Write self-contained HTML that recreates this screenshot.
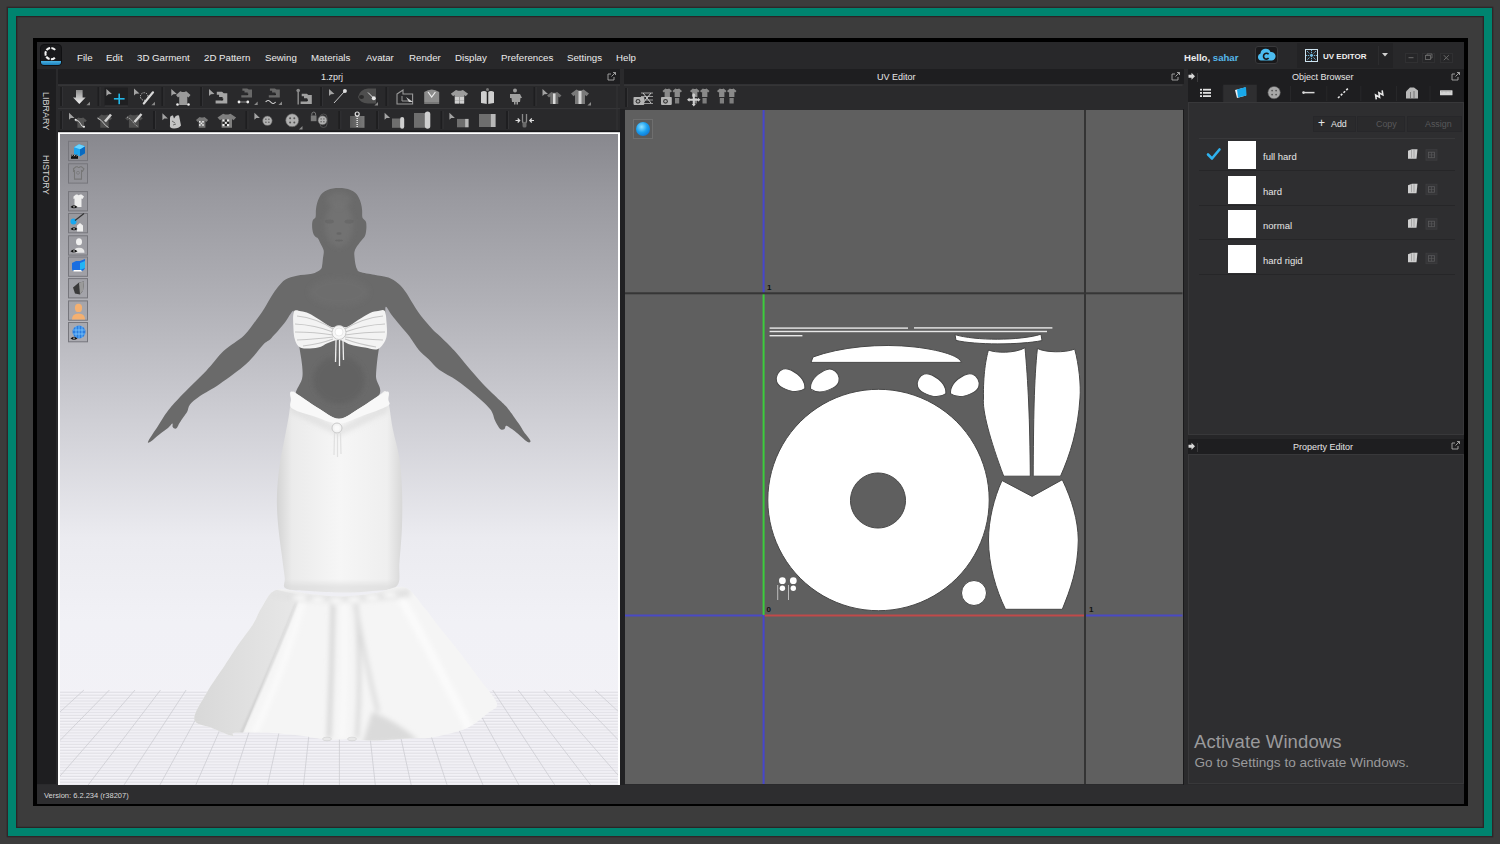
<!DOCTYPE html>
<html><head><meta charset="utf-8">
<style>
*{margin:0;padding:0;box-sizing:border-box}
html,body{width:1500px;height:844px;overflow:hidden;background:#3c3c3c;font-family:"Liberation Sans",sans-serif}
.a{position:absolute}
#teal{left:8px;top:8px;width:1484px;height:828px;border:8.2px solid #00846f;background:#3c3c3c;box-shadow:0 0 0 1.3px #2f2729,inset 0 0 0 1.3px #2b2426}
#win{left:33px;top:38px;width:1435px;height:768px;background:#000}
#app{left:36.5px;top:42px;width:1427.5px;height:762px;background:#2a2a2c}
.menu{color:#ececec;font-size:9.7px;top:51.6px}
.hdr{background:#1e1e20}
.btn{background:#2a2a2c;border:1px solid #27272a}
.wc{width:13px;height:10.5px;background:#262628;border:1px solid #303032}
.ttl{color:#e6e6e6;font-size:9px}
</style></head><body>
<div id="teal" class="a"></div>
<div id="win" class="a"></div>
<div id="app" class="a"></div>

<!-- menubar -->
<div class="a" style="left:36.5px;top:42px;width:1427.5px;height:27px;background:#28282a"></div>
<div class="a" style="left:39.5px;top:44px;width:22px;height:22px;border-radius:4px;background:#19191b;border:1px solid #101012;overflow:hidden">
  <div class="a" style="left:0;bottom:0;width:22px;height:3.6px;background:linear-gradient(#4ab4e6,#1c7eb8)"></div>
</div>
<svg class="a" style="left:39.5px;top:44px;width:22px;height:22px" viewBox="0 0 22 22"><path d="M15.16,5.85 A5.6,5.6 0 1 0 15.16,13.35" fill="none" stroke="#f4f4f4" stroke-width="2.1" stroke-dasharray="4.2,1.2"/></svg>
<!-- top right -->
<span class="a" style="left:1184px;top:51.5px;color:#ececec;font-size:9.6px;font-weight:bold">Hello, <span style="color:#56b8ec">sahar</span></span>
<div class="a" style="left:1254.6px;top:46.3px;width:23.6px;height:18.1px;border-radius:3px;background:#19191b;border:1px solid #38383a"></div>
<svg class="a" style="left:1256px;top:47px;width:21px;height:17px" viewBox="0 0 21 17"><path d="M5,13.5 a3.6,3.6 0 0 1 -0.5,-7 a5.2,5.2 0 0 1 10,-1.5 a4,4 0 0 1 1.5,8.5z" fill="#4cbdf0"/><path d="M12.6,7.3 a2.9,2.9 0 1 0 0,3.8" stroke="#1a1a1c" stroke-width="1.6" fill="none"/></svg>
<div class="a" style="left:1297.4px;top:43px;width:95.6px;height:24.5px;background:#232325"></div>
<div class="a" style="left:1378px;top:46px;width:1px;height:19px;background:#2c2c2e"></div>
<svg class="a" style="left:1305px;top:49px;width:13px;height:13px" viewBox="0 0 13 13"><rect x="0.5" y="0.5" width="12" height="12" fill="none" stroke="#cfe4f0" stroke-width="1"/><path d="M2,2 L11,11 M11,2 L2,11 M6.5,1 v11 M1,6.5 h11" stroke="#7ccaf0" stroke-width="0.9" stroke-dasharray="1.2,0.8"/></svg>
<span class="a" style="left:1323px;top:51.5px;color:#f0f0f0;font-size:8px;font-weight:bold">UV EDITOR</span>
<svg class="a" style="left:1381px;top:52px;width:8px;height:6px" viewBox="0 0 8 6"><path d="M1,1 h6 l-3,3.5z" fill="#d0d0d0"/></svg>
<div class="a wc" style="left:1404.8px;top:52.5px"></div>
<div class="a wc" style="left:1422.4px;top:52.5px"></div>
<div class="a wc" style="left:1440px;top:52.5px"></div>
<svg class="a" style="left:1400px;top:50px;width:60px;height:15px" viewBox="1400 50 60 15"><path d="M1408.5,57.7 h5" stroke="#6a6a6a" stroke-width="1"/><rect x="1425.5" y="55.5" width="5" height="4" fill="none" stroke="#6a6a6a" stroke-width="0.9"/><path d="M1427,55.5 v-1.5 h5 v4 h-1.5" stroke="#6a6a6a" stroke-width="0.9" fill="none"/><path d="M1443.8,55.2 l5,5 m0,-5 l-5,5" stroke="#6a6a6a" stroke-width="1"/></svg>
<span class="a menu" style="left:77px">File</span>
<span class="a menu" style="left:106px">Edit</span>
<span class="a menu" style="left:137px">3D Garment</span>
<span class="a menu" style="left:204px">2D Pattern</span>
<span class="a menu" style="left:265px">Sewing</span>
<span class="a menu" style="left:311px">Materials</span>
<span class="a menu" style="left:366px">Avatar</span>
<span class="a menu" style="left:409px">Render</span>
<span class="a menu" style="left:455px">Display</span>
<span class="a menu" style="left:501px">Preferences</span>
<span class="a menu" style="left:567px">Settings</span>
<span class="a menu" style="left:616px">Help</span>

<!-- left sidebar -->
<div class="a" style="left:36.5px;top:69px;width:19px;height:715px;background:#1e1e20"></div>

<div class="a" style="left:51px;top:92px;transform-origin:0 0;transform:rotate(90deg);color:#d4d4d4;font-size:9px;white-space:nowrap">LIBRARY</div>
<div class="a" style="left:51px;top:155px;transform-origin:0 0;transform:rotate(90deg);color:#d4d4d4;font-size:9px;white-space:nowrap">HISTORY</div>
<!-- left panel -->
<div class="a hdr" style="left:58px;top:69px;width:562px;height:15px"></div>
<span class="a ttl" style="left:321px;top:72px">1.zprj</span>
<div class="a" style="left:58px;top:84px;width:562px;height:48px;background:#29292b"></div>
<div class="a" style="left:58px;top:132px;width:562px;height:653px;background:#fff"></div>

<div class="a" style="left:60px;top:134px;width:558px;height:651px;overflow:hidden">
<svg width="558" height="651" viewBox="60 134 558 651" style="display:block">
  <defs>
    <linearGradient id="bg" x1="0" y1="134" x2="0" y2="785" gradientUnits="userSpaceOnUse">
      <stop offset="0" stop-color="#88888e"/>
      <stop offset="0.10" stop-color="#9a9aa0"/>
      <stop offset="0.255" stop-color="#b0b0b6"/>
      <stop offset="0.44" stop-color="#cfcfd5"/>
      <stop offset="0.62" stop-color="#ebebf0"/>
      <stop offset="0.75" stop-color="#f1f1f6"/>
      <stop offset="1" stop-color="#f3f2f7"/>
    </linearGradient>
    <pattern id="hl" x="0" y="690" width="10" height="2.9" patternUnits="userSpaceOnUse">
      <rect width="10" height="2.9" fill="#f4f3f8"/><rect y="1.7" width="10" height="1" fill="#dcdce2"/>
    </pattern>
    <linearGradient id="skg" x1="277" y1="0" x2="402" y2="0" gradientUnits="userSpaceOnUse">
      <stop offset="0" stop-color="#d4d4d4"/><stop offset="0.12" stop-color="#ebebeb"/>
      <stop offset="0.5" stop-color="#f6f6f6"/><stop offset="0.88" stop-color="#efefef"/><stop offset="1" stop-color="#d8d8d8"/>
    </linearGradient>
    <filter id="bl" x="-20%" y="-20%" width="140%" height="140%"><feGaussianBlur stdDeviation="2.5"/></filter>
    <filter id="bl1" x="-20%" y="-20%" width="140%" height="140%"><feGaussianBlur stdDeviation="1"/></filter>
    <clipPath id="flc"><path d="M276.8,589.8 C284.8,587.6 299.0,592.9 310.0,594.0 C321.0,595.1 332.0,596.7 342.8,596.5 C353.6,596.3 364.7,594.5 375.0,593.0 C385.3,591.5 396.2,584.8 404.4,587.2 C412.6,589.6 418.3,600.6 424.2,607.4 C430.1,614.2 434.5,621.0 440.0,628.0 C445.5,635.0 450.9,641.0 457.2,649.2 C463.5,657.4 471.4,668.0 478.0,677.0 C484.6,686.0 495.1,697.1 496.8,703.1 C498.5,709.1 493.1,708.8 488.0,713.0 C482.9,717.2 475.2,724.4 466.0,728.4 C456.8,732.4 441.8,735.6 433.0,737.2 C424.2,738.9 422.4,737.8 413.2,738.3 C404.0,738.8 388.3,740.3 378.0,740.5 C367.7,740.7 360.4,739.6 351.6,739.4 C342.8,739.2 333.3,740.0 325.2,739.4 C317.1,738.8 312.7,737.1 303.2,736.0 C293.7,734.9 279.4,733.3 268.0,732.8 C256.6,732.3 240.9,732.2 235.0,732.8 C229.1,733.3 236.5,736.8 232.8,736.1 C229.1,735.4 219.4,731.1 213.0,728.4 C206.6,725.6 195.4,725.5 194.3,719.6 C193.2,713.7 201.3,702.3 206.4,693.2 C211.5,684.1 219.7,673.0 225.0,665.0 C230.3,657.0 233.4,651.7 238.0,645.0 C242.6,638.3 248.6,631.3 252.6,625.0 C256.6,618.7 258.0,612.9 262.0,607.0 C266.0,601.1 268.8,592.0 276.8,589.8Z"/></clipPath>
    <clipPath id="skc"><path d="M292.6,391.7 C294.2,390.4 295.8,393.3 300.0,396.0 C304.2,398.7 311.5,404.2 318.0,408.0 C324.5,411.8 332.0,418.7 339.0,418.7 C346.0,418.7 353.5,411.8 360.0,408.0 C366.5,404.2 373.6,398.7 378.0,396.0 C382.4,393.3 384.5,389.7 386.4,391.7 C388.3,393.7 388.4,401.7 389.5,408.0 C390.6,414.3 391.2,421.1 392.9,429.5 C394.5,437.9 397.9,448.2 399.4,458.2 C400.9,468.2 401.6,478.1 402.0,489.4 C402.4,500.7 402.4,513.7 402.0,525.9 C401.6,538.1 400.3,552.4 399.4,562.4 C398.5,572.4 401.4,581.1 396.8,585.9 C392.2,590.7 381.1,589.9 372.0,591.0 C362.9,592.1 352.3,592.5 342.0,592.5 C331.7,592.5 319.3,591.7 310.0,591.0 C300.7,590.3 290.2,590.7 286.0,588.5 C281.8,586.3 285.4,583.2 284.8,578.0 C284.2,572.8 283.2,565.9 282.1,557.2 C281.0,548.5 279.1,535.9 278.2,525.9 C277.3,515.9 276.7,507.3 276.9,497.3 C277.1,487.3 278.2,476.0 279.5,466.0 C280.8,456.0 283.3,445.6 284.8,437.3 C286.3,429.1 287.8,422.1 288.7,416.5 C289.6,410.9 289.9,408.1 290.5,404.0 C291.1,399.9 291.0,393.0 292.6,391.7Z"/></clipPath>
    <clipPath id="bdc"><path d="M339.0,188.0 C337.0,188.0 334.9,188.1 333.0,188.4 C331.1,188.7 329.2,189.2 327.5,190.0 C325.8,190.8 323.9,191.8 322.5,193.0 C321.1,194.2 320.2,195.8 319.3,197.5 C318.4,199.2 317.6,201.4 317.0,203.5 C316.4,205.6 316.1,207.8 315.9,210.0 C315.7,212.2 316.0,215.4 315.6,217.0 C315.2,218.6 313.9,218.5 313.3,219.5 C312.7,220.5 312.4,221.4 312.2,223.0 C312.0,224.6 312.1,227.2 312.3,229.0 C312.5,230.8 313.0,232.7 313.5,234.0 C314.0,235.3 314.8,236.1 315.5,236.8 C316.2,237.6 317.2,237.4 318.0,238.5 C318.8,239.6 319.7,241.8 320.5,243.5 C321.3,245.2 322.4,247.1 323.0,248.5 C323.6,249.9 323.8,250.4 323.8,252.0 C323.8,253.6 323.3,255.8 323.0,258.0 C322.7,260.2 322.6,263.1 322.2,265.0 C321.8,266.9 322.2,268.0 320.5,269.5 C318.8,271.0 315.9,272.8 312.0,273.8 C308.1,274.8 301.3,274.8 296.9,275.7 C292.5,276.6 288.7,277.6 285.5,279.5 C282.3,281.4 280.3,284.2 277.9,287.0 C275.5,289.8 273.5,293.0 271.3,296.5 C269.1,300.0 267.1,303.9 264.6,307.9 C262.1,311.8 259.5,315.6 256.1,320.2 C252.7,324.8 249.4,330.3 244.0,335.4 C238.6,340.5 230.1,344.9 223.8,350.8 C217.5,356.7 213.4,363.3 206.1,371.0 C198.8,378.7 186.4,390.2 180.0,397.0 C173.6,403.8 171.1,406.7 167.4,411.5 C163.7,416.3 161.2,421.1 158.0,426.0 C154.8,430.9 149.8,438.0 148.5,440.7 C147.2,443.4 148.1,443.1 150.0,442.0 C151.9,440.9 156.9,436.2 159.9,433.9 C162.9,431.6 165.9,429.7 168.0,428.0 C170.1,426.3 171.5,423.8 172.3,423.6 C173.1,423.4 172.2,426.0 172.6,426.8 C173.0,427.6 173.8,428.4 174.5,428.6 C175.2,428.8 176.2,428.7 177.0,427.8 C177.8,426.9 178.4,424.9 179.5,423.1 C180.6,421.3 182.2,418.9 183.5,417.0 C184.8,415.1 186.2,413.6 187.3,411.5 C188.4,409.4 187.9,407.1 190.0,404.5 C192.1,401.9 195.1,399.4 200.0,396.0 C204.9,392.6 212.0,389.4 219.7,384.0 C227.4,378.6 239.2,370.3 246.4,363.8 C253.6,357.3 258.8,349.2 262.9,344.9 C267.0,340.6 267.7,341.8 271.3,338.2 C274.9,334.6 280.9,327.7 284.5,323.1 C288.1,318.5 291.6,311.3 293.1,310.8 C294.6,310.3 293.0,316.3 293.5,320.0 C294.0,323.7 295.0,328.3 296.0,333.0 C297.0,337.7 298.4,340.8 299.5,348.0 C300.6,355.2 303.2,367.8 302.5,376.0 C301.8,384.2 295.4,388.0 295.0,397.0 C294.6,406.0 292.7,424.5 300.0,430.0 C307.3,435.5 326.0,435.5 339.0,430.0 C352.0,424.5 371.8,406.0 378.0,397.0 C384.2,388.0 375.8,384.2 376.0,376.0 C376.2,367.8 377.8,355.0 379.0,348.0 C380.2,341.0 381.9,338.2 383.0,334.0 C384.1,329.8 385.2,327.5 385.6,323.0 C386.0,318.5 384.7,308.4 385.6,307.0 C386.6,305.6 388.9,311.5 391.3,314.5 C393.7,317.5 396.8,321.4 399.8,325.0 C402.8,328.6 406.1,332.1 409.3,336.3 C412.5,340.5 415.6,346.2 418.8,350.0 C422.0,353.8 425.0,355.8 428.4,359.1 C431.8,362.4 434.4,366.2 439.1,369.8 C443.9,373.4 451.2,376.4 456.9,380.4 C462.6,384.3 468.0,388.8 473.5,393.5 C479.0,398.2 486.4,404.5 490.0,408.9 C493.6,413.3 493.5,417.1 494.8,420.0 C496.1,422.9 497.0,424.4 498.0,426.0 C499.0,427.6 499.9,429.0 501.0,429.5 C502.1,430.0 503.7,429.6 504.5,429.0 C505.3,428.4 505.1,426.4 505.8,426.0 C506.5,425.6 506.6,425.6 508.5,426.8 C510.4,428.0 513.9,430.5 517.0,433.0 C520.1,435.5 525.0,440.4 527.2,441.7 C529.4,443.0 530.9,442.3 530.4,440.7 C529.9,439.1 526.0,434.9 524.0,432.0 C522.0,429.1 521.4,427.5 518.7,423.6 C516.0,419.7 511.1,412.5 508.0,408.7 C504.9,404.9 504.2,404.7 500.0,400.6 C495.8,396.5 488.6,389.9 483.0,384.0 C477.4,378.1 471.1,370.5 466.4,365.0 C461.6,359.5 458.9,355.6 454.5,350.8 C450.1,346.0 443.8,340.0 440.0,336.3 C436.2,332.6 435.2,332.3 432.0,328.8 C428.8,325.3 423.8,319.6 420.7,315.5 C417.6,311.4 415.6,308.1 413.1,304.1 C410.6,300.2 408.0,295.3 405.5,291.8 C403.0,288.3 400.8,285.7 397.9,283.3 C395.0,280.9 392.3,279.0 388.4,277.6 C384.4,276.2 378.9,275.6 374.2,274.7 C369.5,273.8 362.9,272.8 360.0,271.9 C357.1,270.9 357.8,270.3 357.0,269.0 C356.2,267.7 355.8,265.8 355.4,264.0 C355.0,262.2 354.8,260.0 354.6,258.0 C354.4,256.0 354.1,253.8 354.4,252.0 C354.7,250.2 355.4,248.8 356.5,247.0 C357.6,245.2 359.8,242.6 361.0,241.0 C362.2,239.4 363.2,238.7 364.0,237.5 C364.8,236.3 365.2,235.6 365.6,234.0 C366.0,232.4 366.3,230.0 366.4,228.0 C366.5,226.0 366.4,223.4 366.0,222.0 C365.6,220.6 364.6,220.3 364.0,219.5 C363.4,218.7 362.6,218.6 362.3,217.0 C362.0,215.4 362.3,212.2 362.1,210.0 C361.9,207.8 361.6,205.6 361.0,203.5 C360.4,201.4 359.6,199.2 358.7,197.5 C357.8,195.8 356.9,194.2 355.5,193.0 C354.1,191.8 352.2,190.8 350.5,190.0 C348.8,189.2 346.9,188.7 345.0,188.4 C343.1,188.1 341.0,188.0 339.0,188.0Z"/></clipPath>
  <filter id="bl05" x="-20%" y="-20%" width="140%" height="140%"><feGaussianBlur stdDeviation="0.6"/></filter>
  </defs>
  <rect x="60" y="134" width="558" height="651" fill="url(#bg)"/>
  <rect x="60" y="690" width="558" height="95" fill="url(#hl)"/>
  <g stroke="#c8c8cf" stroke-width="0.7"><line x1="-18.3" y1="690" x2="-163.2" y2="785"/><line x1="7.2" y1="690" x2="-127.3" y2="785"/><line x1="32.8" y1="690" x2="-91.4" y2="785"/><line x1="58.3" y1="690" x2="-55.5" y2="785"/><line x1="83.9" y1="690" x2="-19.6" y2="785"/><line x1="109.4" y1="690" x2="16.3" y2="785"/><line x1="135.0" y1="690" x2="52.2" y2="785"/><line x1="160.5" y1="690" x2="88.1" y2="785"/><line x1="186.1" y1="690" x2="124.0" y2="785"/><line x1="211.6" y1="690" x2="159.9" y2="785"/><line x1="237.2" y1="690" x2="195.8" y2="785"/><line x1="262.8" y1="690" x2="231.7" y2="785"/><line x1="288.3" y1="690" x2="267.6" y2="785"/><line x1="313.8" y1="690" x2="303.5" y2="785"/><line x1="339.4" y1="690" x2="339.4" y2="785"/><line x1="364.9" y1="690" x2="375.3" y2="785"/><line x1="390.5" y1="690" x2="411.2" y2="785"/><line x1="416.0" y1="690" x2="447.1" y2="785"/><line x1="441.6" y1="690" x2="483.0" y2="785"/><line x1="467.1" y1="690" x2="518.9" y2="785"/><line x1="492.7" y1="690" x2="554.8" y2="785"/><line x1="518.2" y1="690" x2="590.7" y2="785"/><line x1="543.8" y1="690" x2="626.6" y2="785"/><line x1="569.4" y1="690" x2="662.5" y2="785"/><line x1="594.9" y1="690" x2="698.4" y2="785"/><line x1="620.5" y1="690" x2="734.3" y2="785"/><line x1="646.0" y1="690" x2="770.2" y2="785"/><line x1="671.5" y1="690" x2="806.1" y2="785"/></g>
  <path d="M339.0,188.0 C337.0,188.0 334.9,188.1 333.0,188.4 C331.1,188.7 329.2,189.2 327.5,190.0 C325.8,190.8 323.9,191.8 322.5,193.0 C321.1,194.2 320.2,195.8 319.3,197.5 C318.4,199.2 317.6,201.4 317.0,203.5 C316.4,205.6 316.1,207.8 315.9,210.0 C315.7,212.2 316.0,215.4 315.6,217.0 C315.2,218.6 313.9,218.5 313.3,219.5 C312.7,220.5 312.4,221.4 312.2,223.0 C312.0,224.6 312.1,227.2 312.3,229.0 C312.5,230.8 313.0,232.7 313.5,234.0 C314.0,235.3 314.8,236.1 315.5,236.8 C316.2,237.6 317.2,237.4 318.0,238.5 C318.8,239.6 319.7,241.8 320.5,243.5 C321.3,245.2 322.4,247.1 323.0,248.5 C323.6,249.9 323.8,250.4 323.8,252.0 C323.8,253.6 323.3,255.8 323.0,258.0 C322.7,260.2 322.6,263.1 322.2,265.0 C321.8,266.9 322.2,268.0 320.5,269.5 C318.8,271.0 315.9,272.8 312.0,273.8 C308.1,274.8 301.3,274.8 296.9,275.7 C292.5,276.6 288.7,277.6 285.5,279.5 C282.3,281.4 280.3,284.2 277.9,287.0 C275.5,289.8 273.5,293.0 271.3,296.5 C269.1,300.0 267.1,303.9 264.6,307.9 C262.1,311.8 259.5,315.6 256.1,320.2 C252.7,324.8 249.4,330.3 244.0,335.4 C238.6,340.5 230.1,344.9 223.8,350.8 C217.5,356.7 213.4,363.3 206.1,371.0 C198.8,378.7 186.4,390.2 180.0,397.0 C173.6,403.8 171.1,406.7 167.4,411.5 C163.7,416.3 161.2,421.1 158.0,426.0 C154.8,430.9 149.8,438.0 148.5,440.7 C147.2,443.4 148.1,443.1 150.0,442.0 C151.9,440.9 156.9,436.2 159.9,433.9 C162.9,431.6 165.9,429.7 168.0,428.0 C170.1,426.3 171.5,423.8 172.3,423.6 C173.1,423.4 172.2,426.0 172.6,426.8 C173.0,427.6 173.8,428.4 174.5,428.6 C175.2,428.8 176.2,428.7 177.0,427.8 C177.8,426.9 178.4,424.9 179.5,423.1 C180.6,421.3 182.2,418.9 183.5,417.0 C184.8,415.1 186.2,413.6 187.3,411.5 C188.4,409.4 187.9,407.1 190.0,404.5 C192.1,401.9 195.1,399.4 200.0,396.0 C204.9,392.6 212.0,389.4 219.7,384.0 C227.4,378.6 239.2,370.3 246.4,363.8 C253.6,357.3 258.8,349.2 262.9,344.9 C267.0,340.6 267.7,341.8 271.3,338.2 C274.9,334.6 280.9,327.7 284.5,323.1 C288.1,318.5 291.6,311.3 293.1,310.8 C294.6,310.3 293.0,316.3 293.5,320.0 C294.0,323.7 295.0,328.3 296.0,333.0 C297.0,337.7 298.4,340.8 299.5,348.0 C300.6,355.2 303.2,367.8 302.5,376.0 C301.8,384.2 295.4,388.0 295.0,397.0 C294.6,406.0 292.7,424.5 300.0,430.0 C307.3,435.5 326.0,435.5 339.0,430.0 C352.0,424.5 371.8,406.0 378.0,397.0 C384.2,388.0 375.8,384.2 376.0,376.0 C376.2,367.8 377.8,355.0 379.0,348.0 C380.2,341.0 381.9,338.2 383.0,334.0 C384.1,329.8 385.2,327.5 385.6,323.0 C386.0,318.5 384.7,308.4 385.6,307.0 C386.6,305.6 388.9,311.5 391.3,314.5 C393.7,317.5 396.8,321.4 399.8,325.0 C402.8,328.6 406.1,332.1 409.3,336.3 C412.5,340.5 415.6,346.2 418.8,350.0 C422.0,353.8 425.0,355.8 428.4,359.1 C431.8,362.4 434.4,366.2 439.1,369.8 C443.9,373.4 451.2,376.4 456.9,380.4 C462.6,384.3 468.0,388.8 473.5,393.5 C479.0,398.2 486.4,404.5 490.0,408.9 C493.6,413.3 493.5,417.1 494.8,420.0 C496.1,422.9 497.0,424.4 498.0,426.0 C499.0,427.6 499.9,429.0 501.0,429.5 C502.1,430.0 503.7,429.6 504.5,429.0 C505.3,428.4 505.1,426.4 505.8,426.0 C506.5,425.6 506.6,425.6 508.5,426.8 C510.4,428.0 513.9,430.5 517.0,433.0 C520.1,435.5 525.0,440.4 527.2,441.7 C529.4,443.0 530.9,442.3 530.4,440.7 C529.9,439.1 526.0,434.9 524.0,432.0 C522.0,429.1 521.4,427.5 518.7,423.6 C516.0,419.7 511.1,412.5 508.0,408.7 C504.9,404.9 504.2,404.7 500.0,400.6 C495.8,396.5 488.6,389.9 483.0,384.0 C477.4,378.1 471.1,370.5 466.4,365.0 C461.6,359.5 458.9,355.6 454.5,350.8 C450.1,346.0 443.8,340.0 440.0,336.3 C436.2,332.6 435.2,332.3 432.0,328.8 C428.8,325.3 423.8,319.6 420.7,315.5 C417.6,311.4 415.6,308.1 413.1,304.1 C410.6,300.2 408.0,295.3 405.5,291.8 C403.0,288.3 400.8,285.7 397.9,283.3 C395.0,280.9 392.3,279.0 388.4,277.6 C384.4,276.2 378.9,275.6 374.2,274.7 C369.5,273.8 362.9,272.8 360.0,271.9 C357.1,270.9 357.8,270.3 357.0,269.0 C356.2,267.7 355.8,265.8 355.4,264.0 C355.0,262.2 354.8,260.0 354.6,258.0 C354.4,256.0 354.1,253.8 354.4,252.0 C354.7,250.2 355.4,248.8 356.5,247.0 C357.6,245.2 359.8,242.6 361.0,241.0 C362.2,239.4 363.2,238.7 364.0,237.5 C364.8,236.3 365.2,235.6 365.6,234.0 C366.0,232.4 366.3,230.0 366.4,228.0 C366.5,226.0 366.4,223.4 366.0,222.0 C365.6,220.6 364.6,220.3 364.0,219.5 C363.4,218.7 362.6,218.6 362.3,217.0 C362.0,215.4 362.3,212.2 362.1,210.0 C361.9,207.8 361.6,205.6 361.0,203.5 C360.4,201.4 359.6,199.2 358.7,197.5 C357.8,195.8 356.9,194.2 355.5,193.0 C354.1,191.8 352.2,190.8 350.5,190.0 C348.8,189.2 346.9,188.7 345.0,188.4 C343.1,188.1 341.0,188.0 339.0,188.0Z" fill="#6a6a6a"/>
  <g clip-path="url(#bdc)" filter="url(#bl)">
    <ellipse cx="339" cy="225" rx="14" ry="22" fill="#767676" opacity="0.6"/>
    <ellipse cx="339" cy="200" rx="12" ry="8" fill="#787878" opacity="0.5"/>
    <ellipse cx="339" cy="380" rx="26" ry="24" fill="#5c5c5c" opacity="0.55"/>
    <ellipse cx="339" cy="292" rx="30" ry="14" fill="#717171" opacity="0.5"/>
  </g>
  <g filter="url(#bl05)">
    <ellipse cx="329.5" cy="221.5" rx="4.5" ry="2" fill="#5a5a5a" opacity="0.35"/>
    <ellipse cx="349" cy="221.5" rx="4.5" ry="2" fill="#5a5a5a" opacity="0.35"/>
    <ellipse cx="339" cy="233.5" rx="2.6" ry="1.3" fill="#555" opacity="0.4"/>
    <ellipse cx="339" cy="240.5" rx="4" ry="0.9" fill="#555" opacity="0.4"/>
      </g>
  <path d="M292.6,391.7 C294.2,390.4 295.8,393.3 300.0,396.0 C304.2,398.7 311.5,404.2 318.0,408.0 C324.5,411.8 332.0,418.7 339.0,418.7 C346.0,418.7 353.5,411.8 360.0,408.0 C366.5,404.2 373.6,398.7 378.0,396.0 C382.4,393.3 384.5,389.7 386.4,391.7 C388.3,393.7 388.4,401.7 389.5,408.0 C390.6,414.3 391.2,421.1 392.9,429.5 C394.5,437.9 397.9,448.2 399.4,458.2 C400.9,468.2 401.6,478.1 402.0,489.4 C402.4,500.7 402.4,513.7 402.0,525.9 C401.6,538.1 400.3,552.4 399.4,562.4 C398.5,572.4 401.4,581.1 396.8,585.9 C392.2,590.7 381.1,589.9 372.0,591.0 C362.9,592.1 352.3,592.5 342.0,592.5 C331.7,592.5 319.3,591.7 310.0,591.0 C300.7,590.3 290.2,590.7 286.0,588.5 C281.8,586.3 285.4,583.2 284.8,578.0 C284.2,572.8 283.2,565.9 282.1,557.2 C281.0,548.5 279.1,535.9 278.2,525.9 C277.3,515.9 276.7,507.3 276.9,497.3 C277.1,487.3 278.2,476.0 279.5,466.0 C280.8,456.0 283.3,445.6 284.8,437.3 C286.3,429.1 287.8,422.1 288.7,416.5 C289.6,410.9 289.9,408.1 290.5,404.0 C291.1,399.9 291.0,393.0 292.6,391.7Z" fill="url(#skg)"/>
  <g clip-path="url(#skc)" filter="url(#bl)">
    <path d="M290,402 L339,428 L388,402 L388,412 L339,436 L290,412Z" fill="#d8d8d8" opacity="0.6"/>
    <rect x="270" y="583" width="140" height="12" fill="#d6d6d6" opacity="0.5"/>
  </g>
  <path d="M292.6,391.7 C297.1,393.0 310.3,403.5 318.0,408.0 C325.7,412.5 332.0,418.7 339.0,418.7 C346.0,418.7 352.1,412.5 360.0,408.0 C367.9,403.5 381.7,393.0 386.4,391.7 C391.1,390.4 388.0,397.6 388.2,400.0 C388.4,402.4 391.9,403.3 387.5,406.0 C383.1,408.7 370.1,413.1 362.0,416.0 C353.9,418.9 346.7,423.3 339.0,423.5 C331.3,423.7 323.7,419.5 316.0,417.0 C308.3,414.5 296.8,411.5 292.6,408.7 C288.4,405.9 291.0,402.8 291.0,400.0 C291.0,397.2 288.1,390.4 292.6,391.7Z" fill="#f8f8f8"/>
  <circle cx="337" cy="428" r="5" fill="#f4f4f4" stroke="#c4c4c4" stroke-width="0.9"/>
  <circle cx="337" cy="428" r="2.6" fill="#fafafa"/>
  <g stroke="#e0e0e0" stroke-width="1.2"><line x1="334.5" y1="433" x2="334" y2="455"/><line x1="337.5" y1="433" x2="337.5" y2="457"/><line x1="340.5" y1="433" x2="341" y2="454"/></g>
  <path d="M276.8,589.8 C284.8,587.6 299.0,592.9 310.0,594.0 C321.0,595.1 332.0,596.7 342.8,596.5 C353.6,596.3 364.7,594.5 375.0,593.0 C385.3,591.5 396.2,584.8 404.4,587.2 C412.6,589.6 418.3,600.6 424.2,607.4 C430.1,614.2 434.5,621.0 440.0,628.0 C445.5,635.0 450.9,641.0 457.2,649.2 C463.5,657.4 471.4,668.0 478.0,677.0 C484.6,686.0 495.1,697.1 496.8,703.1 C498.5,709.1 493.1,708.8 488.0,713.0 C482.9,717.2 475.2,724.4 466.0,728.4 C456.8,732.4 441.8,735.6 433.0,737.2 C424.2,738.9 422.4,737.8 413.2,738.3 C404.0,738.8 388.3,740.3 378.0,740.5 C367.7,740.7 360.4,739.6 351.6,739.4 C342.8,739.2 333.3,740.0 325.2,739.4 C317.1,738.8 312.7,737.1 303.2,736.0 C293.7,734.9 279.4,733.3 268.0,732.8 C256.6,732.3 240.9,732.2 235.0,732.8 C229.1,733.3 236.5,736.8 232.8,736.1 C229.1,735.4 219.4,731.1 213.0,728.4 C206.6,725.6 195.4,725.5 194.3,719.6 C193.2,713.7 201.3,702.3 206.4,693.2 C211.5,684.1 219.7,673.0 225.0,665.0 C230.3,657.0 233.4,651.7 238.0,645.0 C242.6,638.3 248.6,631.3 252.6,625.0 C256.6,618.7 258.0,612.9 262.0,607.0 C266.0,601.1 268.8,592.0 276.8,589.8Z" fill="#f5f5f5"/>
  <defs><linearGradient id="lp" x1="194" y1="0" x2="300" y2="0" gradientUnits="userSpaceOnUse"><stop offset="0" stop-color="#d8d8d8"/><stop offset="1" stop-color="#e8e8e8"/></linearGradient></defs>
  <g clip-path="url(#flc)">
    <path d="M260,586 L299,595 L240,740 L185,725Z" fill="url(#lp)"/>
    <g filter="url(#bl1)">
      <path d="M299,597 Q272,665 240,736" stroke="#c8c8c8" stroke-width="1.6" fill="none"/>
    </g>
    <g filter="url(#bl)">
      <path d="M303,600 Q286,665 254,734" stroke="#fafafa" stroke-width="6" fill="none"/>
      <path d="M333,602 Q332,670 329,738" stroke="#d2d2d2" stroke-width="4" fill="none"/>
      <path d="M344,602 Q346,670 342,738" stroke="#fbfbfb" stroke-width="4" fill="none"/>
      <path d="M356,600 Q362,670 357,738" stroke="#d6d6d6" stroke-width="3.5" fill="none"/>
      <path d="M354,598 Q365,660 378,712" stroke="#dcdcdc" stroke-width="4" fill="none"/>
      <path d="M372,712 Q395,720 418,740 L362,745Z" fill="#dadada"/>
      <path d="M400,596 Q435,660 470,730" stroke="#fbfbfb" stroke-width="8" fill="none"/>
      <path d="M270,590 Q340,600 410,588 L410,597 Q340,607 270,598Z" fill="#e2e2e2"/>
    </g>
    <g fill="#f7f7f7" filter="url(#bl)">
      <ellipse cx="300" cy="598" rx="7" ry="3.5"/><ellipse cx="318" cy="600" rx="7" ry="3.5"/><ellipse cx="336" cy="601" rx="7" ry="3.5"/>
      <ellipse cx="354" cy="600" rx="7" ry="3.5"/><ellipse cx="372" cy="598" rx="7" ry="3.5"/><ellipse cx="390" cy="595" rx="7" ry="3.5"/>
    </g>
  </g>
  <g fill="#e8e8e8" stroke="#cfcfcf" stroke-width="0.6"><ellipse cx="327" cy="739" rx="4.5" ry="1.8"/><ellipse cx="352" cy="739" rx="4.5" ry="1.8"/></g>
  <path d="M294.0,311.5 C295.3,309.2 298.5,311.0 301.0,311.3 C303.5,311.6 305.8,312.1 309.0,313.5 C312.2,314.9 316.2,317.8 320.0,320.0 C323.8,322.2 328.3,326.1 331.5,327.0 C334.7,327.9 336.4,325.5 339.0,325.5 C341.6,325.5 343.8,327.9 347.0,327.0 C350.2,326.1 354.2,322.3 358.0,320.0 C361.8,317.7 366.7,314.5 370.0,313.0 C373.3,311.5 375.6,311.4 378.0,311.0 C380.4,310.6 383.2,309.0 384.6,310.8 C386.0,312.6 386.2,317.5 386.5,322.0 C386.8,326.5 387.6,333.5 386.2,338.0 C384.8,342.5 381.5,347.4 378.0,349.0 C374.5,350.6 369.7,348.2 365.0,347.5 C360.3,346.8 354.3,345.8 350.0,344.5 C345.7,343.2 342.7,340.2 339.0,340.0 C335.3,339.8 331.5,341.8 328.0,343.0 C324.5,344.2 322.4,346.7 318.0,347.5 C313.6,348.3 305.4,349.2 301.6,348.0 C297.8,346.8 296.4,343.8 295.0,340.0 C293.6,336.2 293.5,329.8 293.3,325.0 C293.1,320.2 292.7,313.8 294.0,311.5Z" fill="#f3f3f3"/>
  
  <g stroke="#c6c6c6" stroke-width="1.1" fill="none" filter="url(#bl05)">
    <path d="M297,316 Q316,318 333,329"/><path d="M295,324 Q315,325 333,332"/><path d="M295,332 Q315,332 333,335"/><path d="M297,340 Q317,339 333,337"/><path d="M303,346 Q320,344 333,339"/>
    <path d="M383,316 Q363,318 345,329"/><path d="M385,324 Q364,325 345,332"/><path d="M385,332 Q364,332 345,335"/><path d="M383,340 Q362,339 345,337"/><path d="M376,347 Q358,344 345,339"/>
  </g>
  <circle cx="339" cy="332.5" r="7" fill="#f7f7f7" stroke="#bdbdbd" stroke-width="0.8"/>
  <circle cx="339" cy="332" r="4" fill="#fff" stroke="#d6d6d6" stroke-width="0.5"/>
  <g stroke="#eeeeee" stroke-width="1.3"><line x1="336" y1="340" x2="335.5" y2="362"/><line x1="339.5" y1="340" x2="339.5" y2="366"/><line x1="343" y1="340" x2="343.5" y2="360"/></g>
</svg>
</div>


<!-- UV editor -->
<div class="a hdr" style="left:623.5px;top:69px;width:560px;height:15px"></div>
<span class="a ttl" style="left:877px;top:72px">UV Editor</span>
<div class="a" style="left:625px;top:110px;width:557.5px;height:674px;background:#5f5f5f"></div>


<!-- UV canvas drawing -->
<svg class="a" style="left:625px;top:110px;width:557.5px;height:674px" viewBox="625 110 557.5 674">
  <rect x="762.6" y="110" width="2" height="183" fill="#4646cc"/>
  <rect x="762.6" y="615" width="2" height="170" fill="#4646cc"/>
  <rect x="762.6" y="294" width="2" height="321" fill="#3ccc3c"/>
  <rect x="1084" y="110" width="2" height="674" fill="#343434"/>
  <rect x="625" y="292.3" width="557.5" height="2" fill="#363636"/>
  <rect x="625" y="614.5" width="137.6" height="2" fill="#4a4ac4"/>
  <rect x="1086" y="614.5" width="96.5" height="2" fill="#4a4ac4"/>
  <rect x="764.6" y="614.5" width="319.4" height="2" fill="#c04a4a"/>
  <g font-family="Liberation Sans" font-size="8" font-weight="bold" fill="#111">
    <text x="767" y="290">1</text><text x="766.5" y="612">0</text><text x="1089" y="612">1</text>
  </g>
  <g fill="#fff" stroke="#474747" stroke-width="1">
    <path fill-rule="evenodd" d="M878.5,389.3a110.7,110.7 0 1,0 0.01,0Z M878,473a27.5,27.5 0 1,1 -0.01,0Z"/>
    <circle cx="974" cy="593" r="12.5"/>
    <path transform="translate(791.2,381.3) rotate(28)" d="M15.5,0 C12,-7.5 4,-9.8 -5,-9.8 C-12,-9.8 -15.5,-5.5 -15.5,0 C-15.5,5.5 -12,9.8 -5,9.8 C4,9.8 12,7.5 15.5,0Z"/>
    <path transform="translate(824.2,381.6) rotate(-28) scale(-1,1)" d="M15.5,0 C12,-7.5 4,-9.8 -5,-9.8 C-12,-9.8 -15.5,-5.5 -15.5,0 C-15.5,5.5 -12,9.8 -5,9.8 C4,9.8 12,7.5 15.5,0Z"/>
    <path transform="translate(932.2,386.3) rotate(28)" d="M15.5,0 C12,-7.5 4,-9.8 -5,-9.8 C-12,-9.8 -15.5,-5.5 -15.5,0 C-15.5,5.5 -12,9.8 -5,9.8 C4,9.8 12,7.5 15.5,0Z"/>
    <path transform="translate(964.2,386.3) rotate(-28) scale(-1,1)" d="M15.5,0 C12,-7.5 4,-9.8 -5,-9.8 C-12,-9.8 -15.5,-5.5 -15.5,0 C-15.5,5.5 -12,9.8 -5,9.8 C4,9.8 12,7.5 15.5,0Z"/>
    <path d="M811,362.4 L813,357 C840,347 880,343 915,347 C940,350 955,355 960,360 L961.6,362.4Z"/>
    <path d="M955,334.6 C975,340.8 1020,340.8 1041,334.2 L1042,340.6 C1020,345 975,345 956,340.4Z"/>
    <path d="M988.5,350 C995,353 1015,353.5 1025,347.7 C1028,380 1030,420 1030.3,476.2 L1003.7,476.2 C990,440 982,410 983.5,398 C983,375 986,358 988.5,350Z"/>
    <path d="M1037.4,348.4 C1045,352.5 1065,353 1074.7,349.1 C1079,365 1081,385 1080,398 C1078,430 1070,455 1060.5,476.2 L1033.2,476.2 C1033.5,420 1034,380 1037.4,348.4Z"/>
    <path d="M1002,480.5 L1032.1,496.4 L1062.3,479.7 C1072,500 1078,520 1078.3,540 C1078,570 1070,590 1062.3,609.3 L1005.5,609.3 C996,590 988.5,565 988.5,540 C988.5,520 994,498 1002,480.5Z"/>
  </g>
  <g fill="#e8e8e8">
    <rect x="769.6" y="327.4" width="138.4" height="1.4"/>
    <rect x="914" y="327.2" width="138.4" height="1.4"/>
    <rect x="769.6" y="330.8" width="277.4" height="1.4"/>
    <rect x="769.6" y="335" width="32.8" height="1.4"/>
  </g>
  <g fill="#fff">
    <circle cx="782.4" cy="580.7" r="3.4"/><circle cx="793.3" cy="580.7" r="3.4"/>
    <circle cx="782.4" cy="588.3" r="2.7"/><circle cx="793.3" cy="588.3" r="2.7"/>
  </g>
  <g fill="#bdbdbd"><rect x="777.2" y="585" width="1" height="15"/><rect x="788" y="585" width="1" height="15"/></g>
</svg>
<div class="a" style="left:632.5px;top:118.5px;width:20px;height:20px;border:1px solid #6e6e6e;background:#5a5a5a"></div>
<div class="a" style="left:635.5px;top:121.5px;width:14px;height:14px;border-radius:50%;background:radial-gradient(circle at 40% 35%,#8fe0ff,#1aa0f0 45%,#0a5cc0)"></div>

<!-- right panel -->
<div class="a hdr" style="left:1188px;top:69px;width:276px;height:33px"></div>
<span class="a ttl" style="left:1292px;top:72px">Object Browser</span>
<div class="a" style="left:1188px;top:102px;width:276px;height:332.5px;background:#2e2e30;box-shadow:inset 0 0 0 1px #38383a"></div>
<div class="a btn" style="left:1312.5px;top:115.8px;width:43.6px;height:15.8px"></div>
<div class="a btn" style="left:1357.3px;top:115.8px;width:48px;height:15.8px"></div>
<div class="a btn" style="left:1407.1px;top:115.8px;width:54.5px;height:15.8px"></div>
<span class="a" style="left:1318px;top:116px;color:#e8e8e8;font-size:12px">+</span>
<span class="a" style="left:1331px;top:119px;color:#e8e8e8;font-size:8.9px">Add</span>
<span class="a" style="left:1376px;top:119px;color:#58585a;font-size:8.9px">Copy</span>
<span class="a" style="left:1425px;top:119px;color:#58585a;font-size:8.9px">Assign</span>
<div class="a" style="left:1199px;top:137.5px;width:256px;height:1px;background:#38383a"></div>
<div class="a" style="left:1228px;top:141.2px;width:28px;height:28px;background:#fff"></div>
<span class="a" style="left:1263px;top:151.2px;color:#e6e6e6;font-size:9.5px">full hard</span>
<div class="a" style="left:1199px;top:170.4px;width:256px;height:1px;background:#262628"></div>
<div class="a" style="left:1228px;top:175.7px;width:28px;height:28px;background:#fff"></div>
<span class="a" style="left:1263px;top:185.7px;color:#e6e6e6;font-size:9.5px">hard</span>
<div class="a" style="left:1199px;top:204.9px;width:256px;height:1px;background:#262628"></div>
<div class="a" style="left:1228px;top:210.2px;width:28px;height:28px;background:#fff"></div>
<span class="a" style="left:1263px;top:220.2px;color:#e6e6e6;font-size:9.5px">normal</span>
<div class="a" style="left:1199px;top:239.4px;width:256px;height:1px;background:#262628"></div>
<div class="a" style="left:1228px;top:244.7px;width:28px;height:28px;background:#fff"></div>
<span class="a" style="left:1263px;top:254.7px;color:#e6e6e6;font-size:9.5px">hard rigid</span>
<div class="a" style="left:1199px;top:273.9px;width:256px;height:1px;background:#262628"></div>
<svg class="a" style="left:1205px;top:146px;width:18px;height:16px" viewBox="0 0 18 16"><path d="M3,8.5 L7,12.5 L14.5,3.5" stroke="#2fb2ee" stroke-width="2.6" fill="none" stroke-linecap="round" stroke-linejoin="round"/></svg>

<div class="a" style="left:1188px;top:434.5px;width:276px;height:4.5px;background:#262628"></div>
<div class="a hdr" style="left:1188px;top:439px;width:276px;height:15px"></div>
<span class="a ttl" style="left:1293px;top:442px">Property Editor</span>
<div class="a" style="left:1188px;top:454px;width:276px;height:330px;background:#2e2e30;box-shadow:inset 0 0 0 1px #38383a"></div>
<div class="a" style="left:1194px;top:731px;color:#9a9a9c;font-size:18.5px;letter-spacing:0.1px">Activate Windows</div>
<div class="a" style="left:1194.5px;top:755px;color:#9a9a9c;font-size:13.6px">Go to Settings to activate Windows.</div>

<div class="a" style="left:1182.5px;top:109px;width:1.2px;height:676px;background:#19191b"></div>
<!-- status -->
<div class="a" style="left:36.5px;top:785px;width:1427.5px;height:19px;background:#2d2d2f"></div>
<div class="a" style="left:620px;top:108.5px;width:4.6px;height:676.5px;background:#212123"></div>
<span class="a" style="left:44px;top:791px;color:#d8d8d8;font-size:7.5px">Version: 6.2.234 (r38207)</span>

<svg class="a" style="left:0;top:0;width:1500px;height:844px;pointer-events:none" viewBox="0 0 1500 844">
<rect x="58" y="84.4" width="562" height="1.4" fill="#38383a"/>
<rect x="58" y="108" width="562" height="1.2" fill="#353537"/>
<rect x="58" y="130.6" width="562" height="1.6" fill="#18181a"/>
<rect x="616.5" y="86" width="1" height="44.5" fill="#343436"/>
<rect x="624" y="84.4" width="558.5" height="1.4" fill="#38383a"/>
<rect x="60.1" y="87.0" width="2" height="19.0" fill="#1e1e20"/>
<rect x="62.1" y="87.0" width="1" height="19.0" fill="#343436"/>
<rect x="97.5" y="87.0" width="2" height="19.0" fill="#1e1e20"/>
<rect x="99.5" y="87.0" width="1" height="19.0" fill="#343436"/>
<rect x="161.4" y="87.0" width="2" height="19.0" fill="#1e1e20"/>
<rect x="163.4" y="87.0" width="1" height="19.0" fill="#343436"/>
<rect x="200.1" y="87.0" width="2" height="19.0" fill="#1e1e20"/>
<rect x="202.1" y="87.0" width="1" height="19.0" fill="#343436"/>
<rect x="320.1" y="87.0" width="2" height="19.0" fill="#1e1e20"/>
<rect x="322.1" y="87.0" width="1" height="19.0" fill="#343436"/>
<rect x="385.4" y="87.0" width="2" height="19.0" fill="#1e1e20"/>
<rect x="387.4" y="87.0" width="1" height="19.0" fill="#343436"/>
<rect x="533.5" y="87.0" width="2" height="19.0" fill="#1e1e20"/>
<rect x="535.5" y="87.0" width="1" height="19.0" fill="#343436"/>
<rect x="60.1" y="111.0" width="2" height="18.0" fill="#1e1e20"/>
<rect x="62.1" y="111.0" width="1" height="18.0" fill="#343436"/>
<rect x="153.0" y="111.0" width="2" height="18.0" fill="#1e1e20"/>
<rect x="155.0" y="111.0" width="1" height="18.0" fill="#343436"/>
<rect x="245.4" y="111.0" width="2" height="18.0" fill="#1e1e20"/>
<rect x="247.4" y="111.0" width="1" height="18.0" fill="#343436"/>
<rect x="338.3" y="111.0" width="2" height="18.0" fill="#1e1e20"/>
<rect x="340.3" y="111.0" width="1" height="18.0" fill="#343436"/>
<rect x="376.1" y="111.0" width="2" height="18.0" fill="#1e1e20"/>
<rect x="378.1" y="111.0" width="1" height="18.0" fill="#343436"/>
<rect x="440.5" y="111.0" width="2" height="18.0" fill="#1e1e20"/>
<rect x="442.5" y="111.0" width="1" height="18.0" fill="#343436"/>
<rect x="506.0" y="111.0" width="2" height="18.0" fill="#1e1e20"/>
<rect x="508.0" y="111.0" width="1" height="18.0" fill="#343436"/>
<rect x="104.6" y="87.6" width="23.3" height="18.4" fill="#1f1f21"/>
<rect x="104.6" y="105.5" width="23.3" height="1" fill="#3a3a3c"/>
<defs><linearGradient id="ag" x1="0" y1="0" x2="0" y2="1"><stop offset="0" stop-color="#8a8a8a"/><stop offset="1" stop-color="#f4f4f4"/></linearGradient></defs>
<path d="M76,90 L82.6,90 L82.6,97.4 L85.6,97.4 L79.3,104 L73,97.4 L76,97.4Z" fill="url(#ag)"/>
<path d="M90.0,105.3 l0,-3.6 l-3.6,3.6z" fill="#8a8a8a"/>
<path d="M106.4,89.0 l0,7.0 l1.9,-1.7 l3.6,-0.2 z" fill="#a4a4a4"/>
<rect x="113.9" y="98" width="10.7" height="1.6" fill="#22b6e6"/><rect x="118.4" y="93.6" width="1.6" height="10.6" fill="#22b6e6"/>
<path d="M134.0,88.5 l0,7.0 l1.9,-1.7 l3.6,-0.2 z" fill="#a4a4a4"/>
<circle cx="144.2" cy="96.5" r="3.8" fill="none" stroke="#cfcfcf" stroke-width="1" stroke-dasharray="1.2,1.2"/>
<path d="M153,92.3 L143.8,103.5" stroke="#d8d8d8" stroke-width="2.2" stroke-linecap="round"/>
<path d="M155.0,105.3 l0,-3.6 l-3.6,3.6z" fill="#8a8a8a"/>
<path d="M171.3,89.0 l0,7.0 l1.9,-1.7 l3.6,-0.2 z" fill="#a4a4a4"/>
<path d="M180.3,91.3 L182.1,92.1 L184.4,92.1 L186.2,91.3 L190.5,95.1 L188.5,97.6 L187.3,96.5 L187.3,104.9 L179.2,104.9 L179.2,96.5 L178.0,97.6 L176.0,95.1Z" fill="#9a9a9a" opacity="1"/>
<circle cx="177.5" cy="104.5" r="1.3" fill="#eee"/><circle cx="188.5" cy="104.5" r="1.3" fill="#eee"/>
<path d="M209.0,89.0 l0,7.0 l1.9,-1.7 l3.6,-0.2 z" fill="#a4a4a4"/>
<path d="M216.8,91.8 L222.0,91.8 L223.8,93.2 L227.3,93.2 L227.3,103.5 L215.6,103.5 L215.6,100.6 L222.6,100.6 L222.6,97.1 L219.1,97.1 L219.1,94.7 L216.8,94.7Z" fill="#a6a6a6"/>
<path d="M220.9,100.2 l2.3,-2.3 l0,2.3 z" fill="#222"/>
<path d="M242.4,88.5 L247.2,88.5 L248.8,89.6 L252.0,89.6 L252.0,97.5 L241.3,97.5 L241.3,95.2 L247.7,95.2 L247.7,92.5 L244.5,92.5 L244.5,90.8 L242.4,90.8Z" fill="#686868"/>
<path d="M246.1,95.0 l2.1,-1.8 l0,1.8 z" fill="#222"/>
<line x1="239" y1="102" x2="247.8" y2="102" stroke="#999" stroke-width="0.8"/><circle cx="239" cy="102" r="1.4" fill="#eee"/><circle cx="247.8" cy="102" r="1.4" fill="#eee"/>
<path d="M257.7,105.0 l0,-3.6 l-3.6,3.6z" fill="#8a8a8a"/>
<path d="M269.9,88.5 L274.9,88.5 L276.5,89.6 L279.8,89.6 L279.8,97.5 L268.8,97.5 L268.8,95.2 L275.4,95.2 L275.4,92.5 L272.1,92.5 L272.1,90.8 L269.9,90.8Z" fill="#686868"/>
<path d="M273.8,95.0 l2.2,-1.8 l0,1.8 z" fill="#222"/>
<path d="M265.6,102 q2.5,-3 5,0 t5,0" stroke="#ddd" stroke-width="1.1" fill="none"/>
<path d="M282.0,105.0 l0,-3.6 l-3.6,3.6z" fill="#8a8a8a"/>
<line x1="298.2" y1="89.5" x2="298.2" y2="104.4" stroke="#8a8a8a" stroke-width="1.5"/><circle cx="298.2" cy="90.5" r="1.8" fill="#8a8a8a"/>
<path d="M301.7,93.7 L306.8,93.7 L308.4,94.9 L311.8,94.9 L311.8,104.0 L300.6,104.0 L300.6,101.4 L307.3,101.4 L307.3,98.3 L304.0,98.3 L304.0,96.3 L301.7,96.3Z" fill="#a0a0a0"/>
<path d="M305.6,101.1 l2.2,-2.1 l0,2.1 z" fill="#222"/>
<path d="M329.0,89.0 l0,7.0 l1.9,-1.7 l3.6,-0.2 z" fill="#a4a4a4"/>
<line x1="334" y1="103" x2="344.9" y2="91" stroke="#c8c8c8" stroke-width="1"/><circle cx="344.9" cy="90.9" r="2" fill="#e0e0e0"/>
<path d="M358,97 q2,-8 10,-8.5 l8,0 l0,15 l-8,0 q-8,-0.5 -10,-6.5z" fill="#4e4e4e"/><ellipse cx="361.5" cy="97" rx="2.5" ry="2" fill="#2a2a2a"/>
<line x1="368" y1="92.5" x2="373.8" y2="98.3" stroke="#ddd" stroke-width="1"/><circle cx="373.8" cy="98.3" r="2" fill="#e6e6e6"/>
<path d="M378.0,105.5 l0,-3.6 l-3.6,3.6z" fill="#8a8a8a"/>
<path d="M397,94 L403,90 L403,94 L412.6,94 L412.6,104 L397,104Z" fill="none" stroke="#9a9a9a" stroke-width="1.1"/><path d="M402,96 L402,101 L409,101" stroke="#9a9a9a" stroke-width="1" fill="none"/><path d="M406,97 l7,5 l-4,0z" fill="#cfcfcf"/>
<path d="M424.2,92 q7.5,-5 15,0 l0,10 l-15,0z" fill="#8c8c8c"/><path d="M428,92 l3.7,5 l3.7,-5" stroke="#eee" stroke-width="1.2" fill="none"/><rect x="424.2" y="102" width="15" height="2" fill="#777"/>
<path d="M456.0,90.0 L458.1,90.8 L460.8,90.8 L462.9,90.0 L468.1,93.8 L465.7,96.2 L464.3,95.1 L464.3,103.5 L454.6,103.5 L454.6,95.1 L453.2,96.2 L450.8,93.8Z" fill="#9c9c9c" opacity="1"/>
<g fill="#cfcfcf"><rect x="455" y="97" width="4" height="3"/><rect x="460" y="97" width="4" height="3"/><rect x="455" y="100.5" width="4" height="3"/><rect x="460" y="100.5" width="4" height="3"/></g>
<path d="M481,92 q3,-2 6,0 l0,12 l-6,-1z" fill="#cfcfcf"/><path d="M488,92 q3,-2 6,0 l0,11 l-6,1z" fill="#cfcfcf"/><path d="M487.5,89 l0,15" stroke="#222" stroke-width="1.5"/><circle cx="487.5" cy="89.5" r="1.5" fill="#777"/>
<circle cx="515" cy="90.5" r="2" fill="#9a9a9a"/><path d="M510,94 l10,0 l2,4 l-1.5,0 l-0.5,4 l-2,0 l0,2.5 l-1.5,0 l0,-2.5 l-1,0 l0,2.5 l-1.5,0 l0,-2.5 l-2,0 l-0.5,-4 l-1.5,0z" fill="#a0a0a0"/>
<path d="M542.5,89.0 l0,7.0 l1.9,-1.7 l3.6,-0.2 z" fill="#a4a4a4"/>
<path d="M551.4,92.0 L553.1,92.7 L555.4,92.7 L557.1,92.0 L561.5,95.4 L559.5,97.5 L558.3,96.6 L558.3,104.0 L550.2,104.0 L550.2,96.6 L549.0,97.5 L547.0,95.4Z" fill="#707070" opacity="1"/>
<rect x="553" y="93.5" width="2.5" height="10.5" fill="#dcdcdc"/>
<path d="M576.4,89.5 L578.6,90.4 L581.4,90.4 L583.6,89.5 L589.0,93.6 L586.5,96.2 L585.0,95.0 L585.0,104.0 L575.0,104.0 L575.0,95.0 L573.5,96.2 L571.0,93.6Z" fill="#7a7a7a" opacity="1"/>
<rect x="578.5" y="91" width="3" height="13" fill="#d4d4d4"/>
<path d="M591.0,105.5 l0,-3.6 l-3.6,3.6z" fill="#8a8a8a"/>
<path d="M69.0,112.8 l0,7.0 l1.9,-1.7 l3.6,-0.2 z" fill="#a4a4a4"/>
<path d="M78.3,117.5 L79.8,118.1 L81.7,118.1 L83.2,117.5 L86.8,120.4 L85.1,122.2 L84.1,121.4 L84.1,127.8 L77.4,127.8 L77.4,121.4 L76.4,122.2 L74.7,120.4Z" fill="#555" opacity="1"/>
<path d="M75.6,119.8 q4,1 5,4 t3.4,3" stroke="#ddd" stroke-width="0.9" fill="none"/><circle cx="75.6" cy="119.8" r="1" fill="#eee"/><circle cx="84" cy="126.8" r="1" fill="#eee"/>
<path d="M101.5,114.5 L103.3,115.3 L105.7,115.3 L107.5,114.5 L112.0,118.2 L109.9,120.6 L108.7,119.6 L108.7,127.8 L100.3,127.8 L100.3,119.6 L99.1,120.6 L97.0,118.2Z" fill="#4e4e4e" opacity="1"/>
<path d="M97.5,118 q4,2 6,5 t5,4.5" stroke="#cfcfcf" stroke-width="0.9" fill="none"/><path d="M111,114.5 l-6,7" stroke="#d0d0d0" stroke-width="2.6"/>
<path d="M130.3,114.5 L132.5,115.3 L135.3,115.3 L137.5,114.5 L142.8,118.2 L140.3,120.6 L138.9,119.6 L138.9,127.8 L128.9,127.8 L128.9,119.6 L127.5,120.6 L125.0,118.2Z" fill="#4e4e4e" opacity="1"/>
<path d="M127,117 q4,2 6,5 t5,4.5" stroke="#cfcfcf" stroke-width="0.9" fill="none" stroke-dasharray="1,1"/><path d="M141.5,114 l-7,8" stroke="#d4d4d4" stroke-width="2.4"/>
<path d="M162.4,113.3 l0,7.0 l1.9,-1.7 l3.6,-0.2 z" fill="#a4a4a4"/>
<path d="M170,118 q0,-3 3,-2.5 l1,3 q2,-4 5,-3 l2,10 q-2,3 -7,3 q-5,0 -4,-4z" fill="#c4c4c4"/><path d="M172,121 l3,2 m-2,2 l3,-1" stroke="#555" stroke-width="0.8"/>
<path d="M199.6,117.0 L201.1,117.6 L203.0,117.6 L204.5,117.0 L208.1,120.0 L206.4,122.0 L205.4,121.1 L205.4,127.8 L198.7,127.8 L198.7,121.1 L197.7,122.0 L196.0,120.0Z" fill="#777" opacity="1"/>
<g fill="#eee"><rect x="199" y="121" width="1.6" height="1.6"/><rect x="202.2" y="121" width="1.6" height="1.6"/><rect x="200.6" y="122.6" width="1.6" height="1.6"/><rect x="199" y="124.2" width="1.6" height="1.6"/><rect x="202.2" y="124.2" width="1.6" height="1.6"/></g>
<path d="M223.1,113.7 L225.3,114.5 L228.3,114.5 L230.5,113.7 L236.1,117.6 L233.5,120.2 L232.0,119.1 L232.0,127.8 L221.6,127.8 L221.6,119.1 L220.1,120.2 L217.5,117.6Z" fill="#7e7e7e" opacity="1"/>
<g fill="#f0f0f0"><rect x="222.5" y="119.5" width="2.2" height="2.2"/><rect x="226.9" y="119.5" width="2.2" height="2.2"/><rect x="224.7" y="121.7" width="2.2" height="2.2"/><rect x="222.5" y="123.9" width="2.2" height="2.2"/><rect x="226.9" y="123.9" width="2.2" height="2.2"/></g><g fill="#222"><rect x="224.7" y="119.5" width="2.2" height="2.2"/><rect x="222.5" y="121.7" width="2.2" height="2.2"/><rect x="226.9" y="121.7" width="2.2" height="2.2"/><rect x="224.7" y="123.9" width="2.2" height="2.2"/></g>
<path d="M254.4,112.8 l0,7.0 l1.9,-1.7 l3.6,-0.2 z" fill="#a4a4a4"/>
<circle cx="267.4" cy="120.8" r="4.8" fill="#b0b0b0" stroke="#555" stroke-width="0.6"/>
<circle cx="265.9" cy="119.3" r="0.7" fill="#555"/>
<circle cx="265.9" cy="122.3" r="0.7" fill="#555"/>
<circle cx="268.9" cy="119.3" r="0.7" fill="#555"/>
<circle cx="268.9" cy="122.3" r="0.7" fill="#555"/>
<circle cx="292.2" cy="120.3" r="6.5" fill="#b0b0b0" stroke="#555" stroke-width="0.6"/>
<circle cx="290.1" cy="118.2" r="1.0" fill="#555"/>
<circle cx="290.1" cy="122.4" r="1.0" fill="#555"/>
<circle cx="294.3" cy="118.2" r="1.0" fill="#555"/>
<circle cx="294.3" cy="122.4" r="1.0" fill="#555"/>
<path d="M302.5,129.6 l0,-3.6 l-3.6,3.6z" fill="#8a8a8a"/>
<rect x="310.8" y="115.5" width="5.7" height="5.7" fill="#7a7a7a"/><path d="M311.8,115.5 v-1.5 a1.9,1.9 0 0 1 3.8,0 v1.5" stroke="#7a7a7a" stroke-width="1" fill="none"/>
<rect x="320" y="114" width="7" height="13.5" rx="3.5" fill="none" stroke="#555" stroke-width="0.9"/>
<circle cx="322.5" cy="120.3" r="4.5" fill="#b0b0b0" stroke="#555" stroke-width="0.6"/>
<circle cx="321.1" cy="118.9" r="0.7" fill="#555"/>
<circle cx="321.1" cy="121.7" r="0.7" fill="#555"/>
<circle cx="323.9" cy="118.9" r="0.7" fill="#555"/>
<circle cx="323.9" cy="121.7" r="0.7" fill="#555"/>
<defs><linearGradient id="zg" x1="0" y1="0" x2="1" y2="0"><stop offset="0" stop-color="#5a5a5a"/><stop offset="1" stop-color="#7a7a7a"/></linearGradient></defs>
<rect x="350" y="116" width="14.5" height="11.8" fill="url(#zg)"/><circle cx="357.2" cy="114" r="2" fill="none" stroke="#ddd" stroke-width="1.2"/><path d="M357.2,116 v11" stroke="#ddd" stroke-width="1.6" stroke-dasharray="1,1"/>
<path d="M384.6,112.8 l0,7.0 l1.9,-1.7 l3.6,-0.2 z" fill="#a4a4a4"/>
<rect x="392.0" y="118.5" width="8.5" height="9.3" fill="#6e6e6e"/>
<rect x="400.1" y="117.0" width="4.1" height="11.8" rx="2.1" fill="#cfcfcf"/>
<rect x="414.0" y="113.0" width="11.4" height="14.8" fill="#6e6e6e"/>
<rect x="424.8" y="111.5" width="5.5" height="17.3" rx="2.8" fill="#cfcfcf"/>
<path d="M449.4,112.8 l0,7.0 l1.9,-1.7 l3.6,-0.2 z" fill="#a4a4a4"/>
<rect x="457.0" y="118.9" width="8.1" height="8.4" fill="#6e6e6e"/>
<rect x="465.1" y="118.9" width="3.5" height="8.4" fill="#b8b8b8"/>
<rect x="479.0" y="114.0" width="11.5" height="13.0" fill="#6e6e6e"/>
<rect x="490.6" y="114.0" width="5.0" height="13.0" fill="#b8b8b8"/>
<path d="M522.5,114 v7 a2,2 0 0 0 4,0 v-7" stroke="#8a8a8a" stroke-width="1.3" fill="none"/><rect x="522.5" y="122" width="4" height="5.5" rx="1.5" fill="#6a6a6a"/>
<path d="M515.5,120.5 h4 m-1.8,-2 l2,2 l-2,2" stroke="#ddd" stroke-width="1.2" fill="none"/><path d="M534,120.5 h-4 m1.8,-2 l-2,2 l2,2" stroke="#ddd" stroke-width="1.2" fill="none"/>
<rect x="625.0" y="88.0" width="2" height="19.0" fill="#1e1e20"/>
<rect x="627.0" y="88.0" width="1" height="19.0" fill="#343436"/>
<g fill="#9a9a9a"><rect x="641" y="92.5" width="12" height="1"/><rect x="641" y="96" width="12" height="1"/><rect x="641" y="99.5" width="12" height="1"/><rect x="641" y="103" width="12" height="1"/></g><path d="M643,93 l8,10 m0,-10 l-8,10" stroke="#ccc" stroke-width="1"/>
<rect x="633.5" y="97.0" width="10.8" height="7.9" rx="0.8" fill="#b4b4b4"/><circle cx="638.0" cy="101.3" r="2.4" fill="#3a3a3a"/><circle cx="638.0" cy="101.3" r="1.2" fill="#aaa"/>
<path d="M665.4,88.5 L666.5,89.0 L668.0,89.0 L669.1,88.5 L672.0,90.9 L670.7,92.4 L669.9,91.7 L669.9,97.0 L664.6,97.0 L664.6,91.7 L663.8,92.4 L662.5,90.9Z" fill="#8a8a8a" opacity="1"/>
<path d="M675.4,88.5 L676.5,89.0 L678.0,89.0 L679.1,88.5 L682.0,90.9 L680.7,92.4 L679.9,91.7 L679.9,97.0 L674.6,97.0 L674.6,91.7 L673.8,92.4 L672.5,90.9Z" fill="#8a8a8a" opacity="1"/>
<rect x="665.3" y="98.0" width="4.2" height="5.5" fill="#7e7e7e"/><rect x="675.0" y="98.0" width="4.2" height="5.5" fill="#7e7e7e"/>
<rect x="661.0" y="97.0" width="10.8" height="7.9" rx="0.8" fill="#b4b4b4"/><circle cx="665.5" cy="101.3" r="2.4" fill="#3a3a3a"/><circle cx="665.5" cy="101.3" r="1.2" fill="#aaa"/>
<path d="M692.9,88.5 L694.0,89.0 L695.5,89.0 L696.6,88.5 L699.5,90.9 L698.2,92.4 L697.4,91.7 L697.4,97.0 L692.1,97.0 L692.1,91.7 L691.3,92.4 L690.0,90.9Z" fill="#8a8a8a" opacity="1"/>
<path d="M702.9,88.5 L704.0,89.0 L705.5,89.0 L706.6,88.5 L709.5,90.9 L708.2,92.4 L707.4,91.7 L707.4,97.0 L702.1,97.0 L702.1,91.7 L701.3,92.4 L700.0,90.9Z" fill="#8a8a8a" opacity="1"/>
<rect x="692.8" y="98.0" width="4.2" height="5.5" fill="#7e7e7e"/><rect x="702.5" y="98.0" width="4.2" height="5.5" fill="#7e7e7e"/>
<path d="M693.8,94.5 v10.5 M688.5,99.7 h10.5" stroke="#cfcfcf" stroke-width="2"/><path d="M693.8,93 l-2,2.5 h4z M693.8,106.5 l-2,-2.5 h4z M687,99.7 l2.5,-2 v4z M700.5,99.7 l-2.5,-2 v4z" fill="#cfcfcf"/>
<path d="M719.9,88.5 L721.0,89.0 L722.5,89.0 L723.6,88.5 L726.5,90.9 L725.2,92.4 L724.4,91.7 L724.4,97.0 L719.1,97.0 L719.1,91.7 L718.3,92.4 L717.0,90.9Z" fill="#8a8a8a" opacity="1"/>
<path d="M729.9,88.5 L731.0,89.0 L732.5,89.0 L733.6,88.5 L736.5,90.9 L735.2,92.4 L734.4,91.7 L734.4,97.0 L729.1,97.0 L729.1,91.7 L728.3,92.4 L727.0,90.9Z" fill="#8a8a8a" opacity="1"/>
<rect x="719.8" y="98.0" width="4.2" height="5.5" fill="#7e7e7e"/><rect x="729.5" y="98.0" width="4.2" height="5.5" fill="#7e7e7e"/>
<path d="M1188.5,74.8 h3 v-2 l3.5,3.5 l-3.5,3.5 v-2 h-3z" fill="#d8d8d8"/><rect x="1197" y="73" width="1" height="9" fill="#3a3a3c"/>
<g fill="#e0e0e0"><rect x="1200" y="88.8" width="2" height="1.8"/><rect x="1203" y="88.8" width="8" height="1.8"/><rect x="1200" y="92" width="2" height="1.8"/><rect x="1203" y="92" width="8" height="1.8"/><rect x="1200" y="95.2" width="2" height="1.8"/><rect x="1203" y="95.2" width="8" height="1.8"/></g>
<rect x="1223.2" y="84.7" width="33.6" height="17.3" fill="#2e2e30"/>
<path d="M1235,90 l10,-2.5 l1,8 l-9,2.5z" fill="#eeeeee"/><path d="M1237,89.5 l9,-2.5 l0.5,8.5 l-8.5,2z" fill="#18a8ea"/>
<circle cx="1274.1" cy="92.6" r="6.2" fill="#a8a8a8" stroke="#555" stroke-width="0.6"/>
<circle cx="1272.1" cy="90.6" r="0.9" fill="#555"/>
<circle cx="1272.1" cy="94.6" r="0.9" fill="#555"/>
<circle cx="1276.1" cy="90.6" r="0.9" fill="#555"/>
<circle cx="1276.1" cy="94.6" r="0.9" fill="#555"/>
<path d="M1303,92.6 h11.5" stroke="#d8d8d8" stroke-width="1.5"/><circle cx="1303.5" cy="92.6" r="1.3" fill="#d8d8d8"/>
<path d="M1338,98 l11,-10.5" stroke="#e8e8e8" stroke-width="1.6" stroke-dasharray="2.2,1.6"/>
<path d="M1372.5,97.5 l2,-4 l2,4 l2,-4 l2,4 l2,-4" stroke="#e8e8e8" stroke-width="1.6" fill="none" transform="rotate(-35 1377.5 92.5)"/>
<path d="M1406,98.5 v-7 l4,-4 h4 l4,3 v8z" fill="#b8b8b8"/><path d="M1410.5,92 v6.5 M1414,91 v7.5" stroke="#666" stroke-width="0.8"/>
<rect x="1440" y="90.3" width="12.5" height="5" rx="0.5" fill="#d4d4d4"/><path d="M1442,90.3 v2 M1444,90.3 v1.5 M1446,90.3 v2 M1448,90.3 v1.5 M1450,90.3 v2" stroke="#777" stroke-width="0.5"/>
<rect x="1326.4" y="86" width="0.8" height="15" fill="#2a2a2c"/>
<rect x="1360.5" y="86" width="0.8" height="15" fill="#2a2a2c"/>
<rect x="1396.0" y="86" width="0.8" height="15" fill="#2a2a2c"/>
<rect x="1429.6" y="86" width="0.8" height="15" fill="#2a2a2c"/>
<rect x="1290.0" y="86" width="0.8" height="15" fill="#2a2a2c"/>
<rect x="1222.7" y="86" width="0.8" height="15" fill="#2a2a2c"/>
<path d="M611.0,74.0 h-3 v6 h6 v-3" stroke="#a8a8a8" stroke-width="0.9" fill="none"/><path d="M611.5,76.5 l4,-4 m-2.5,0 h2.5 v2.5" stroke="#a8a8a8" stroke-width="0.9" fill="none"/>
<path d="M1175.0,74.0 h-3 v6 h6 v-3" stroke="#a8a8a8" stroke-width="0.9" fill="none"/><path d="M1175.5,76.5 l4,-4 m-2.5,0 h2.5 v2.5" stroke="#a8a8a8" stroke-width="0.9" fill="none"/>
<path d="M1455.0,74.0 h-3 v6 h6 v-3" stroke="#a8a8a8" stroke-width="0.9" fill="none"/><path d="M1455.5,76.5 l4,-4 m-2.5,0 h2.5 v2.5" stroke="#a8a8a8" stroke-width="0.9" fill="none"/>
<path d="M1455.0,443.0 h-3 v6 h6 v-3" stroke="#a8a8a8" stroke-width="0.9" fill="none"/><path d="M1455.5,445.5 l4,-4 m-2.5,0 h2.5 v2.5" stroke="#a8a8a8" stroke-width="0.9" fill="none"/>
<path d="M1188.5,444.8 h3 v-2 l3.5,3.5 l-3.5,3.5 v-2 h-3z" fill="#d8d8d8"/><rect x="1197" y="443" width="1" height="9" fill="#3a3a3c"/>
<path d="M1408,150.7 l4,-1.5 h5.5 l-1,9.5 h-8.5z" fill="#cfcfcf"/><path d="M1411.5,149.7 v8 M1414,149.7 v8" stroke="#8a8a8a" stroke-width="0.6"/>
<rect x="1426" y="149.7" width="11" height="10.5" fill="#353537" stroke="#3e3e40" stroke-width="0.8"/><rect x="1428.5" y="152.2" width="6" height="5.5" fill="none" stroke="#5a5a5c" stroke-width="0.8"/><path d="M1431.5,152.2 v5.5 M1428.5,154.9 h6" stroke="#5a5a5c" stroke-width="0.6"/>
<path d="M1408,185.2 l4,-1.5 h5.5 l-1,9.5 h-8.5z" fill="#cfcfcf"/><path d="M1411.5,184.2 v8 M1414,184.2 v8" stroke="#8a8a8a" stroke-width="0.6"/>
<rect x="1426" y="184.2" width="11" height="10.5" fill="#353537" stroke="#3e3e40" stroke-width="0.8"/><rect x="1428.5" y="186.7" width="6" height="5.5" fill="none" stroke="#5a5a5c" stroke-width="0.8"/><path d="M1431.5,186.7 v5.5 M1428.5,189.4 h6" stroke="#5a5a5c" stroke-width="0.6"/>
<path d="M1408,219.7 l4,-1.5 h5.5 l-1,9.5 h-8.5z" fill="#cfcfcf"/><path d="M1411.5,218.7 v8 M1414,218.7 v8" stroke="#8a8a8a" stroke-width="0.6"/>
<rect x="1426" y="218.7" width="11" height="10.5" fill="#353537" stroke="#3e3e40" stroke-width="0.8"/><rect x="1428.5" y="221.2" width="6" height="5.5" fill="none" stroke="#5a5a5c" stroke-width="0.8"/><path d="M1431.5,221.2 v5.5 M1428.5,223.9 h6" stroke="#5a5a5c" stroke-width="0.6"/>
<path d="M1408,254.2 l4,-1.5 h5.5 l-1,9.5 h-8.5z" fill="#cfcfcf"/><path d="M1411.5,253.2 v8 M1414,253.2 v8" stroke="#8a8a8a" stroke-width="0.6"/>
<rect x="1426" y="253.2" width="11" height="10.5" fill="#353537" stroke="#3e3e40" stroke-width="0.8"/><rect x="1428.5" y="255.7" width="6" height="5.5" fill="none" stroke="#5a5a5c" stroke-width="0.8"/><path d="M1431.5,255.7 v5.5 M1428.5,258.4 h6" stroke="#5a5a5c" stroke-width="0.6"/>
<rect x="68.5" y="141.3" width="19" height="19.3" fill="#8f8f95" fill-opacity="0.35" stroke="#76767c" stroke-width="1"/>
<rect x="68.5" y="163.8" width="19" height="19.3" fill="#8f8f95" fill-opacity="0.35" stroke="#76767c" stroke-width="1"/>
<rect x="68.5" y="191.6" width="19" height="19.3" fill="#8f8f95" fill-opacity="0.35" stroke="#76767c" stroke-width="1"/>
<rect x="68.5" y="213.5" width="19" height="19.3" fill="#8f8f95" fill-opacity="0.35" stroke="#76767c" stroke-width="1"/>
<rect x="68.5" y="235.8" width="19" height="19.3" fill="#8f8f95" fill-opacity="0.35" stroke="#76767c" stroke-width="1"/>
<rect x="68.5" y="257.0" width="19" height="19.3" fill="#8f8f95" fill-opacity="0.35" stroke="#76767c" stroke-width="1"/>
<rect x="68.5" y="278.6" width="19" height="19.3" fill="#8f8f95" fill-opacity="0.35" stroke="#76767c" stroke-width="1"/>
<rect x="68.5" y="300.9" width="19" height="19.3" fill="#8f8f95" fill-opacity="0.35" stroke="#76767c" stroke-width="1"/>
<rect x="68.5" y="322.5" width="19" height="19.3" fill="#8f8f95" fill-opacity="0.35" stroke="#76767c" stroke-width="1"/>
<path d="M74,147.3 l5,-3 l6,2 l0,7 l-5,3 l-6,-2z" fill="#1ea4ee"/><path d="M80,149.3 l5,-3 v7 l-5,3z" fill="#0a6ac0"/><path d="M74,147.3 l5,-3 l6,2 l-5,3z" fill="#6ad4ff"/>
<rect x="71" y="154.8" width="7" height="4" fill="#111"/><path d="M71.5,156.3 l1.2,-1.5 m1.3,1.5 l1.2,-1.5 m1.3,1.5 l1.2,-1.5" stroke="#eee" stroke-width="0.8"/>
<path d="M73.5,168.8 l2.5,-2 h1.5 q1,1.5 2.5,0 h1.5 l2.5,2 l-1.5,2.5 l-1,-0.7 v8.5 h-7 v-8.5 l-1,0.7z" fill="none" stroke="#777" stroke-width="1.1"/><circle cx="78" cy="172.8" r="1.5" fill="none" stroke="#777" stroke-width="0.7"/>
<path d="M73.5,196.6 l2.5,-2 h1.5 q1,1.5 2.5,0 h1.5 l2.5,2 l-1.5,2.5 l-1,-0.7 v8.5 h-7 v-8.5 l-1,0.7z" fill="#eeeeee"/>
<path d="M70.5,207.1 q3.5,-3.5 7,0 q-3.5,2.5 -7,0z" fill="#111"/><circle cx="74.0" cy="206.8" r="1" fill="#888"/>
<circle cx="73.5" cy="221.5" r="3" fill="#18a8f0"/><path d="M75,220.5 l9,-7" stroke="#333" stroke-width="1.2"/><path d="M77,225.5 l3,-2.5 l3,2.5 v6 h-6z" fill="#eee"/>
<path d="M70.5,229.0 q3.5,-3.5 7,0 q-3.5,2.5 -7,0z" fill="#111"/><circle cx="74.0" cy="228.7" r="1" fill="#888"/>
<ellipse cx="79" cy="241.8" rx="3" ry="3.5" fill="#f0f0f0"/><path d="M73.5,252.8 q0,-5 5.5,-5 q5.5,0 5.5,5z" fill="#e8e8e8"/>
<path d="M70.5,251.3 q3.5,-3.5 7,0 q-3.5,2.5 -7,0z" fill="#111"/><circle cx="74.0" cy="251.0" r="1" fill="#888"/>
<path d="M72,263.0 l4,-2 l4,0 l5,-2 l0,9 q-1,3 -4,3 h-7 q-2,0 -2,-2z" fill="#1a6ee0"/><path d="M80,263.0 l5,-2 v7 l-5,2z" fill="#22b4f4"/><path d="M73.5,270.0 h7 q1.5,0 1.5,1.5 h-8.5z" fill="#fff"/>
<path d="M73,287.6 l6,-5 l5,-1 l-1,9 l-3,4 l-5,-1z" fill="#3a3a3a"/><path d="M79,282.6 l5,-1 l-1,9 l-3,4z" fill="#9a9a9a"/>
<ellipse cx="78.5" cy="307.9" rx="3.6" ry="4.2" fill="#f4b070"/><path d="M72,319.4 q0,-6 6.5,-6 q6.5,0 6.5,6z" fill="#f4b070"/>
<circle cx="79" cy="332.0" r="6.5" fill="#2a7ee0"/><path d="M73,330.0 h12 M73,334.0 h12 M76,326.0 v12 M79,325.5 v13 M82,326.0 v12" stroke="#8ad0ff" stroke-width="0.7"/>
<path d="M70.5,338.5 q3.5,-3.5 7,0 q-3.5,2.5 -7,0z" fill="#111"/><circle cx="74.0" cy="338.2" r="1" fill="#888"/>
</svg>
</body></html>
